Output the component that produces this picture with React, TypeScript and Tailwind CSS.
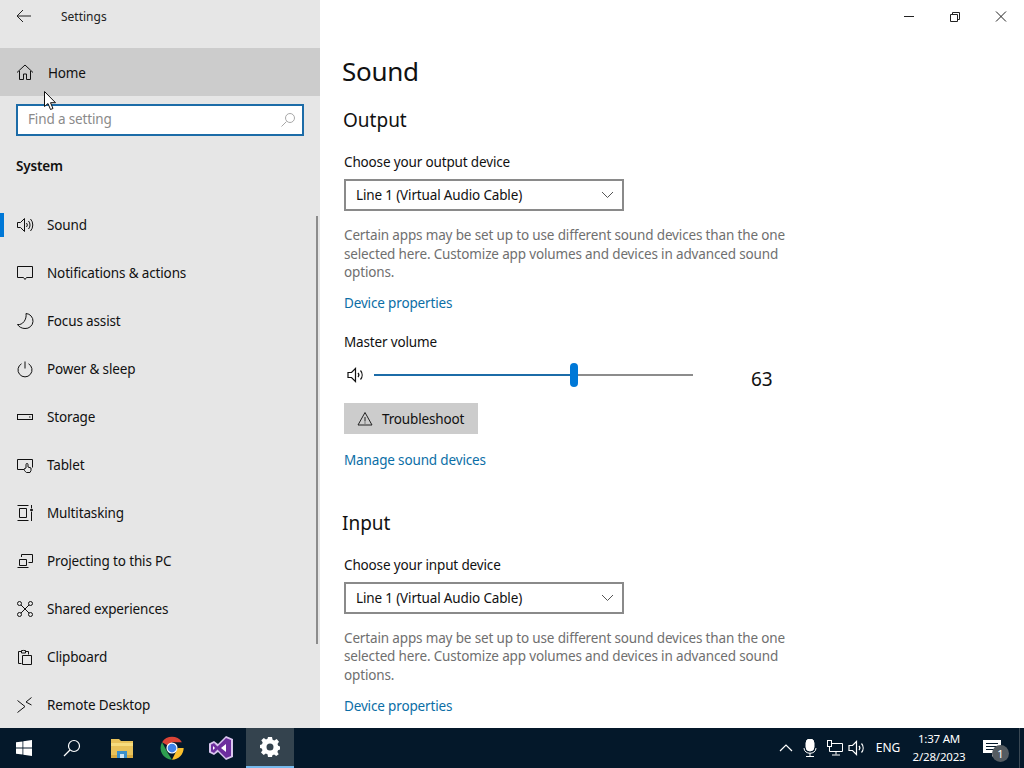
import React from "react";

const S = ({ children, w = 18, h = 18, vb = "0 0 18 18", className = "" }: { children: React.ReactNode; w?: number; h?: number; vb?: string; className?: string }) => (
  <svg width={w} height={h} viewBox={vb} fill="none" stroke="currentColor" strokeWidth="1" className={"shrink-0 " + className}>
    {children}
  </svg>
);

const SoundIcon = () => (
  <S>
    <path d="M1.500 6.500h3l4-4v13l-4-4h-3z" />
    <path d="M10.500 7a3 3 0 0 1 0 4" />
    <path d="M12.500 5a6 6 0 0 1 0 8" />
    <path d="M14.500 3a9 9 0 0 1 0 12" />
  </S>
);

const SoundLowIcon = () => (
  <S>
    <path d="M1 6.500h3.500l4-4v13l-4-4H1z" strokeWidth="1.200" />
    <path d="M11 7a3 3 0 0 1 0 4" strokeWidth="1.200" />
    <path d="M13.500 4.500a7 7 0 0 1 0 9" strokeWidth="1.200" />
  </S>
);

const navItems: [string, React.ReactNode][] = [
  ["Sound", <SoundIcon />],
  ["Notifications & actions", <S><path d="M1.500 2.500h15v11h-6l-1.500 2-1.500-2h-6z" /></S>],
  ["Focus assist", <S><path d="M10 1.500a7.500 7.500 0 0 1-1 15c-3 0-6-1.500-7.500-4 5 1 9.500-5 8.500-11z" /></S>],
  ["Power & sleep", <S><path d="M9 1.500v7" /><path d="M5.500 3.800a7 7 0 1 0 7 0" /></S>],
  ["Storage", <S><rect x="1.500" y="6.500" width="15" height="5" /><path d="M13 9h1.500" /></S>],
  ["Tablet", <S><path d="M8 13.500H1.500v-10h15v8" /><path d="M10.500 16.500c-1.500-1-2.500-2.500-2.500-3.500l2-1V8.500a1 1 0 0 1 2 0V11l3 1v2.500l-1 2z" /></S>],
  ["Multitasking", <S><path d="M1.500 1.500h11M1.500 16.500h11M3.500 4.500h7v9h-7zM15.500 1v3M15.500 8v9" /><circle cx="15.500" cy="6" r="1" fill="currentColor" /></S>],
  ["Projecting to this PC", <S><path d="M5.500 5V2.500h11v8h-4" /><path d="M3.500 7.500h7v6h-7zM1.500 15.500h11" /></S>],
  ["Shared experiences", <S><circle cx="3.500" cy="3.500" r="2" /><circle cx="14.500" cy="3.500" r="2" /><circle cx="3.500" cy="14.500" r="2" /><circle cx="14.500" cy="14.500" r="2" /><path d="M5 5l8 8M13 5l-8 8" /></S>],
  ["Clipboard", <S><path d="M5.500 15.500h-3v-12h3M9 3.500h3.500v3" /><path d="M5.500 5V2.500h1.500a1.500 1.500 0 0 1 1 0H9.500V5zM6.500 7.500h9v9h-9z" /></S>],
  ["Remote Desktop", <S><path d="M1.500 4.500L9 10.500l-7.500 6M15.500 1.500L10 6l5.500 3" /></S>],
];

const Link = ({ children }: { children: React.ReactNode }) => (
  <div className="h-5 leading-5 text-[#0b6ea6]">{children}</div>
);

const Dropdown = () => (
  <div className="w-[280px] h-8 border-2 border-[#8a8a8a] flex items-center justify-between pl-[10px] pr-2 text-[#111]">
    <span className="pt-px">Line 1 (Virtual Audio Cable)</span>
    <svg width="13" height="8" viewBox="0 0 13 8" fill="none" stroke="#555" strokeWidth="1"><path d="M1 1l5.500 5.500L12 1" /></svg>
  </div>
);

const Para = () => (
  <p className="w-[445px] leading-[18.5px] text-[#6f6f6f]">
    Certain apps may be set up to use different sound devices than the one selected here. Customize app volumes and devices in advanced sound options.
  </p>
);

const Tray = ({ children, w }: { children: React.ReactNode; w: string }) => (
  <div className={"h-full flex items-center justify-center text-white " + w}>{children}</div>
);

export default function App() {
  return (
    <div className="relative w-[1024px] h-[768px] overflow-hidden flex flex-col bg-white text-[#111] text-[13.5px] tracking-[-0.15px] [font-family:'Noto_Sans',sans-serif]">
      <div className="flex h-[728px] overflow-hidden">
        {/* Sidebar */}
        <aside className="relative w-[320px] shrink-0 bg-[#e6e6e6] overflow-hidden">
          <div className="h-12 flex items-start">
            <div className="w-12 h-8 flex items-center justify-center">
              <svg width="16" height="14" viewBox="0 0 16 14" fill="none" stroke="#222" strokeWidth="1"><path d="M15 7H1.500M7 1L1 7l6 6" /></svg>
            </div>
            <div className="ml-[13px] h-8 leading-[34px] text-[12px] tracking-normal text-[#222]">Settings</div>
          </div>
          <div className="h-12 bg-[#cccccc] flex items-center pl-4 gap-[14px]">
            <S><path d="M1 9.500L9 2l8 7.500" /><path d="M3.500 8v8.500h4V11h3v5.500h4V8" /></S>
            <span className="pt-0.5">Home</span>
          </div>
          <div className="mt-2 mx-4 h-8 border-2 border-[#1c6ca8] bg-white flex items-center justify-between pl-[10px] pr-[6px] text-[#8a8a8a]">
            <span className="-translate-y-px">Find a setting</span>
            <svg width="16" height="16" viewBox="0 0 16 16" fill="none" stroke="#a8a8a8" strokeWidth="1"><circle cx="10" cy="6" r="4.500" /><path d="M6.500 9.500L1.500 14.500" /></svg>
          </div>
          <div className="mt-5 ml-4 h-5 leading-5 font-semibold">System</div>
          <nav className="mt-[25px]">
            {navItems.map(([label, icon], i) => (
              <div key={label} className="relative h-12 flex items-center pl-4 gap-[13px]">
                {i === 0 && <div className="absolute left-0 top-3 w-1 h-6 bg-[#0078d7]" />}
                {icon}
                <span>{label}</span>
              </div>
            ))}
          </nav>
          <div className="absolute left-[316px] top-[216px] w-[2px] h-[428px] bg-[#8c8c8c]" />
        </aside>

        {/* Content */}
        <main className="relative flex-1 overflow-hidden">
          <div className="flex justify-end h-8">
            {[
              <path key="a" d="M4 8.500h10" />,
              <path key="b" d="M4.500 6.500h7v7h-7zM6.500 6.500v-2h7v7h-2" />,
              <path key="c" d="M4 3.500l10 10M14 3.500l-10 10" />,
            ].map((p, i) => (
              <div key={i} className="w-[46px] h-8 flex items-center justify-center">
                <svg width="18" height="17" viewBox="0 0 18 17" fill="none" stroke="#222" strokeWidth="1">{p}</svg>
              </div>
            ))}
          </div>
          <div className="pl-6">
            <h1 className="mt-5 -ml-[2px] h-10 leading-[38px] text-[26px] tracking-[-0.3px]">Sound</h1>
            <h2 className="mt-3 -ml-[1px] h-8 leading-8 text-[19px] tracking-normal">Output</h2>
            <div className="mt-4 h-5 leading-5">Choose your output device</div>
            <div className="mt-[7px]"><Dropdown /></div>
            <div className="mt-[15px]"><Para /></div>
            <div className="mt-[11px]"><Link>Device properties</Link></div>
            <div className="mt-[19px] h-5 leading-5">Master volume</div>
            <div className="mt-[11px] relative h-6 w-[440px] flex items-center">
              <span className="ml-[3px]"><SoundLowIcon /></span>
              <div className="ml-[9px] w-[319px] h-[2px] bg-[#8c8c8c] relative">
                <div className="h-[2px] w-[200px] bg-[#1c6ca8]" />
                <div className="absolute left-[196px] -top-[11px] w-2 h-6 rounded-full bg-[#0078d7]" />
              </div>
              <span className="absolute left-[407px] top-[4px] text-[19px] tracking-normal leading-6">63</span>
            </div>
            <div className="mt-4 w-[134px] h-[31px] bg-[#cccccc] flex items-center pl-[13px] gap-[9px]">
              <svg width="16" height="15" viewBox="0 0 16 15" fill="none" stroke="#222" strokeWidth="1"><path d="M8 1.500l7 12.500H1z" /><path d="M8 6v4.500M8 11.500v1" /></svg>
              <span className="pt-0.5">Troubleshoot</span>
            </div>
            <div className="mt-4"><Link>Manage sound devices</Link></div>
            <h2 className="mt-[37px] -ml-[2px] h-8 leading-8 text-[19px] tracking-normal">Input</h2>
            <div className="mt-4 h-5 leading-5">Choose your input device</div>
            <div className="mt-[7px]"><Dropdown /></div>
            <div className="mt-[15px]"><Para /></div>
            <div className="mt-3"><Link>Device properties</Link></div>
          </div>
        </main>
      </div>

      {/* Taskbar */}
      <footer className="h-10 bg-[#04182a] flex items-center text-white pr-1">
        <div className="w-12 h-full flex items-center justify-center">
          <svg width="16" height="16" viewBox="0 0 16 16" fill="#fff"><path d="M0 2.300l6.500-.9v6.200H0zM7.300 1.300L16 0v7.600H7.300zM0 8.400h6.500v6.200L0 13.700zM7.300 8.400H16V16l-8.700-1.200z" /></svg>
        </div>
        <div className="w-12 h-full flex items-center justify-center">
          <svg width="18" height="18" viewBox="0 0 18 18" fill="none" stroke="#fff" strokeWidth="1.200"><circle cx="11" cy="7" r="5.500" /><path d="M7 11l-6 6" /></svg>
        </div>
        <div className="ml-[2px] w-12 h-full flex items-center justify-center">
          <svg width="22" height="19" viewBox="0 0 22 19"><path d="M0 0h8l2 2h12v15H0z" fill="#e9c25a" /><path d="M0 4h22v3H0z" fill="#f7dc7e" /><path d="M0 16h22v3H0z" fill="#d8a93e" /><path d="M6 12h10v7H6z" fill="#3b8fcb" /><path d="M9 15h4v4H9z" fill="#cfe4f3" /></svg>
        </div>
        <div className="ml-[2px] w-12 h-full flex items-center justify-center">
          <svg width="28" height="28" viewBox="0 0 48 48">
            <path d="M24 24L7 14A20 20 0 0 1 41 14H24z" fill="#db4437" />
            <path d="M24 24h20A20 20 0 0 1 24 44l10-20z" fill="#fbc02d" />
            <path d="M24 44A20 20 0 0 1 7 14l10 19z" fill="#2e9e4f" />
            <circle cx="24" cy="24" r="9.500" fill="#fff" />
            <circle cx="24" cy="24" r="7.500" fill="#3f82ea" />
          </svg>
        </div>
        <div className="ml-[1px] w-12 h-full flex items-center justify-center">
          <svg width="24" height="24" viewBox="0 0 24 24">
            <path d="M17 0l7 3v18l-7 3-8-8-4 3-5-2.500v-9L5 5l4 3z" fill="#d9c6ee" />
            <path d="M17 2l5 2v16l-5 2-8.500-8.500L5 17l-3-1.500v-7L5 7l3.500 3.500z" fill="#6d2e9e" />
            <path d="M17 8v8l-5-4z" fill="#fff" />
            <path d="M4 10v4l2-2z" fill="#fff" />
          </svg>
        </div>
        <div className="ml-[1px] w-12 h-full flex items-center justify-center bg-[#34434e] border-b-2 border-[#76b9ed]">
          <svg width="20" height="20" viewBox="0 0 20 20" fill="#fff" fillRule="evenodd"><path d="M8 0h4l.6 2.700 1.700.7L16.700 2 19 4.800l-1.500 2.300.7 1.700L20 9.500v3l-2 .7-.6 1.700 1.300 2.300L16.200 19l-2.100-1.400-1.700.7L12 20H8l-.5-2.700-1.700-.7L3.700 18 1 15.500l1.500-2.300-.7-1.700L0 11V8l2-.7.700-1.700L1.300 3.200 3.800 1l2.200 1.400 1.500-.7zM10 6.500a3.500 3.500 0 1 0 0 7 3.500 3.500 0 0 0 0-7z" /></svg>
        </div>
        <div className="flex-1" />
        <Tray w="w-6"><svg width="14" height="8" viewBox="0 0 14 8" fill="none" stroke="#fff" strokeWidth="1.200"><path d="M1 7l6-6 6 6" /></svg></Tray>
        <Tray w="w-6"><svg width="14" height="18" viewBox="0 0 14 18" fill="none" stroke="#fff"><rect x="3" y="0" width="8" height="12" rx="4" fill="#fff" /><path d="M1 9c0 7 12 7 12 0M7 14v3M3 17.500h8" /></svg></Tray>
        <Tray w="ml-[2px] w-[22px]"><svg width="16" height="16" viewBox="0 0 16 16" fill="none" stroke="#fff"><path d="M5 3.500h10.500v8h-13V7" /><path d="M9 11.500v3M5 15h8" /><rect x="0.500" y="0.500" width="4" height="6" /></svg></Tray>
        <Tray w="w-[22px]"><SoundLowIcon /></Tray>
        <div className="ml-1 w-8 text-[12px] tracking-normal text-center">ENG</div>
        <div className="ml-[2px] w-[66px] text-[11.500px] tracking-[-0.2px] leading-[18px] text-center">
          <div>1:37 AM</div>
          <div>2/28/2023</div>
        </div>
        <div className="relative ml-px w-[38px] h-full flex items-center justify-center">
          <svg width="18" height="17" viewBox="0 0 18 17" fill="#fff"><path d="M0 0h18v13h-6l-3 4v-4H0z" /><path d="M3 3.500h12M3 6.500h12M3 9.500h9" stroke="#04182a" /></svg>
          <div className="absolute left-[19px] top-[17px] w-[17px] h-[17px] rounded-full bg-[#555c62] text-[11px] tracking-normal leading-[17px] text-center text-white">1</div>
        </div>
        <div className="ml-2 w-px h-full bg-[#3a4854]" />
      </footer>

      {/* Mouse pointer */}
      <svg className="absolute left-[44px] top-[91px]" width="13" height="20" viewBox="0 0 13 20">
        <path d="M.5.500v15l3.500-3 2.500 6 2.500-1-2.500-5.800h5z" fill="#fff" stroke="#111" strokeWidth="1" />
      </svg>
    </div>
  );
}
